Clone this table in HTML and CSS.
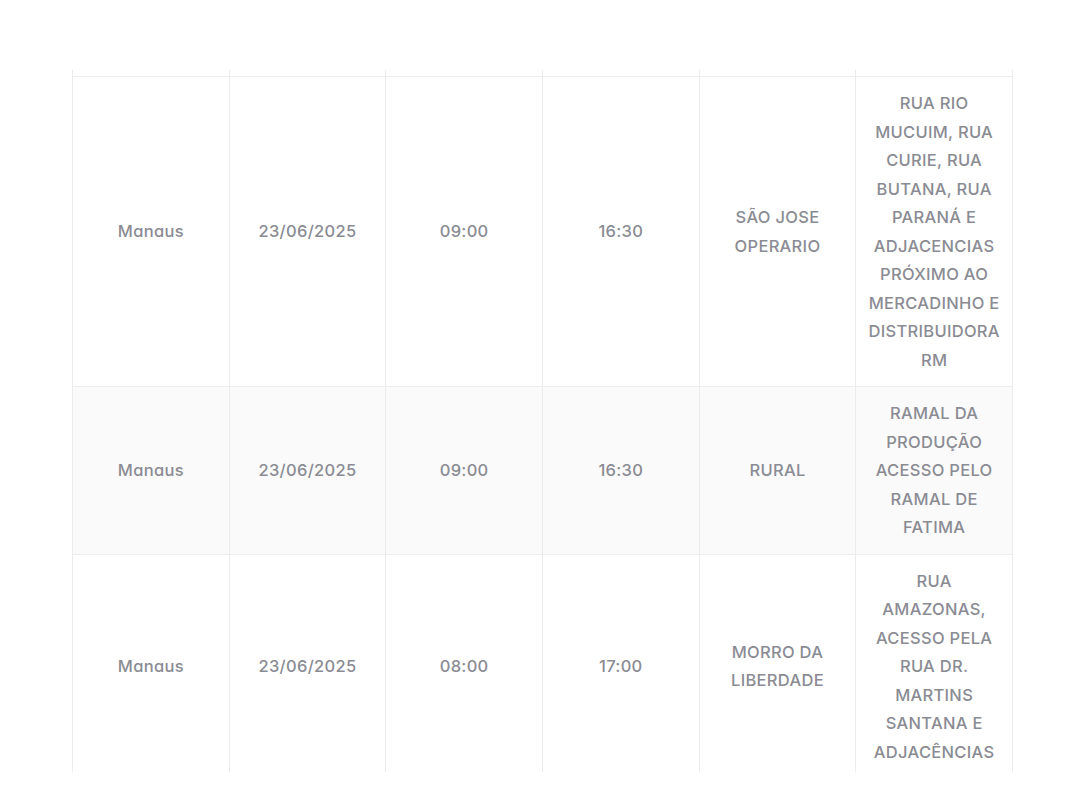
FILE: index.html
```html
<!DOCTYPE html>
<html lang="pt-BR">
<head>
<meta charset="utf-8">
<title>Interrupções programadas</title>
<link rel="stylesheet" href="styles.css">
</head>
<body>
<div class="wrap">
  <table class="schedule">
    <colgroup>
      <col><col><col><col><col><col>
    </colgroup>
    <tbody>
      <tr class="stub"><td></td><td></td><td></td><td></td><td></td><td></td></tr>
      <tr>
        <td>Manaus</td>
        <td>23/06/2025</td>
        <td>09:00</td>
        <td>16:30</td>
        <td class="up">SÃO JOSE<br>OPERARIO</td>
        <td class="up">RUA RIO<br>MUCUIM, RUA<br>CURIE, RUA<br>BUTANA, RUA<br>PARANÁ E<br>ADJACENCIAS<br>PRÓXIMO AO<br>MERCADINHO E<br>DISTRIBUIDORA<br>RM</td>
      </tr>
      <tr class="alt">
        <td>Manaus</td>
        <td>23/06/2025</td>
        <td>09:00</td>
        <td>16:30</td>
        <td class="up">RURAL</td>
        <td class="up">RAMAL DA<br>PRODUÇÃO<br>ACESSO PELO<br>RAMAL DE<br>FATIMA</td>
      </tr>
      <tr>
        <td>Manaus</td>
        <td>23/06/2025</td>
        <td>08:00</td>
        <td>17:00</td>
        <td class="up">MORRO DA<br>LIBERDADE</td>
        <td class="up">RUA<br>AMAZONAS,<br>ACESSO PELA<br>RUA DR.<br>MARTINS<br>SANTANA E<br>ADJACÊNCIAS</td>
      </tr>
    </tbody>
  </table>
</div>
</body>
</html>
```
FILE: styles.css
```css
html, body {
  margin: 0;
  padding: 0;
  background: #ffffff;
}

body {
  font-family: "Inter", "Noto Sans", sans-serif;
  font-feature-settings: "cv11" 1;
}

.wrap {
  margin: 70px 0 0 72px;
  width: 941px;
  height: 702px;
  overflow: hidden;
}

.schedule {
  width: 941px;
  border-collapse: collapse;
  table-layout: fixed;
}

.schedule td {
  border: 1px solid #ececec;
  padding: 12px 6px;
  text-align: center;
  vertical-align: middle;
  color: #8a8b93;
  font-size: 16.5px;
  font-weight: 500;
  line-height: 28.5px;
  letter-spacing: 0.3px;
}

.schedule tr.stub td {
  height: 6px;
  padding: 0;
  line-height: 0;
  border-top: none;
}

.schedule tr.alt td {
  background: #fafafa;
}
```
